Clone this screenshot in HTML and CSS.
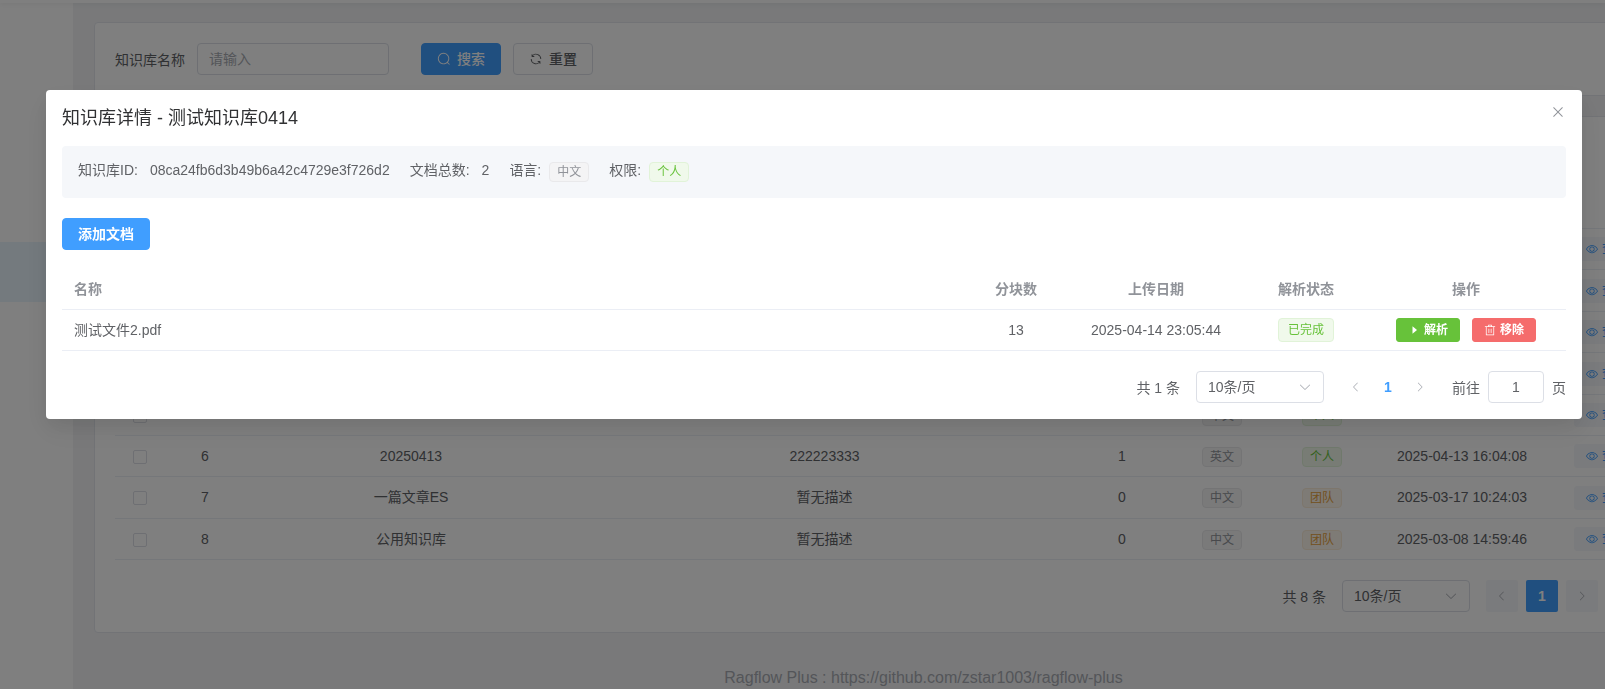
FILE: index.html
```html
<!DOCTYPE html>
<html lang="zh-CN">
<head>
    <meta charset="UTF-8">
    <meta name="viewport" content="width=device-width, initial-scale=1.0">
    <title>知识库管理</title>
    <link rel="stylesheet" href="styles.css">
</head>
<body>
    <!-- icon set -->
    <svg class="icon-defs" aria-hidden="true">
        <symbol id="i-search" viewBox="0 0 1024 1024"><path d="m795.904 750.72 124.992 124.928a32 32 0 0 1-45.248 45.248L750.656 795.904a416 416 0 1 1 45.248-45.248zM480 832a352 352 0 1 0 0-704 352 352 0 0 0 0 704"/></symbol>
        <symbol id="i-refresh" viewBox="0 0 1024 1024"><path d="M771.776 794.88A384 384 0 0 1 128 512h64a320 320 0 0 0 555.712 216.448H654.72a32 32 0 1 1 0-64h149.056a32 32 0 0 1 32 32v148.928a32 32 0 1 1-64 0v-50.56zM276.288 295.616h92.992a32 32 0 0 1 0 64H220.16a32 32 0 0 1-32-32V178.56a32 32 0 0 1 64 0v50.56A384 384 0 0 1 896.128 512h-64a320 320 0 0 0-555.776-216.384z"/></symbol>
        <symbol id="i-view" viewBox="0 0 1024 1024"><path d="M512 160c320 0 512 352 512 352S832 864 512 864 0 512 0 512s192-352 512-352m0 64c-225.28 0-384.128 208.064-436.8 288 52.608 79.872 211.456 288 436.8 288 225.28 0 384.128-208.064 436.8-288-52.608-79.872-211.456-288-436.8-288m0 64a224 224 0 1 1 0 448 224 224 0 0 1 0-448m0 64a160.192 160.192 0 0 0-160 160c0 88.192 71.744 160 160 160s160-71.808 160-160-71.744-160-160-160"/></symbol>
        <symbol id="i-delete" viewBox="0 0 1024 1024"><path d="M160 256H96a32 32 0 0 1 0-64h256V95.936a32 32 0 0 1 32-32h256a32 32 0 0 1 32 32V192h256a32 32 0 1 1 0 64h-64v672a32 32 0 0 1-32 32H192a32 32 0 0 1-32-32zm448-64v-64H416v64zM224 896h576V256H224zm192-128a32 32 0 0 1-32-32V416a32 32 0 0 1 64 0v320a32 32 0 0 1-32 32m192 0a32 32 0 0 1-32-32V416a32 32 0 0 1 64 0v320a32 32 0 0 1-32 32"/></symbol>
        <symbol id="i-play" viewBox="0 0 1024 1024"><path d="M384 192v640l384-320.064z"/></symbol>
        <symbol id="i-down" viewBox="0 0 1024 1024"><path d="M831.872 340.864 512 652.672 192.128 340.864a30.592 30.592 0 0 0-42.752 0 29.12 29.12 0 0 0 0 41.6L489.664 714.24a32 32 0 0 0 44.672 0l340.288-331.712a29.12 29.12 0 0 0 0-41.728 30.592 30.592 0 0 0-42.752 0z"/></symbol>
        <symbol id="i-left" viewBox="0 0 1024 1024"><path d="M609.408 149.376 277.76 489.6a32 32 0 0 0 0 44.672l331.648 340.352a29.12 29.12 0 0 0 41.728 0 30.592 30.592 0 0 0 0-42.752L339.264 511.936l311.872-319.872a30.592 30.592 0 0 0 0-42.688 29.12 29.12 0 0 0-41.728 0z"/></symbol>
        <symbol id="i-right" viewBox="0 0 1024 1024"><path d="M340.864 149.312a30.592 30.592 0 0 0 0 42.752L652.736 512 340.864 831.872a30.592 30.592 0 0 0 0 42.752 29.12 29.12 0 0 0 41.728 0L714.24 534.336a32 32 0 0 0 0-44.672L382.592 149.376a29.12 29.12 0 0 0-41.728 0z"/></symbol>
        <symbol id="i-close" viewBox="0 0 1024 1024"><path d="M764.288 214.592 512 466.88 259.712 214.592a31.936 31.936 0 0 0-45.12 45.12L466.752 512 214.528 764.224a31.936 31.936 0 1 0 45.12 45.184L512 557.184l252.288 252.288a31.936 31.936 0 0 0 45.12-45.12L557.12 512.064l252.288-252.352a31.936 31.936 0 1 0-45.12-45.184z"/></symbol>
    </svg>

    <div class="app">
        <header class="topbar"></header>
        <div class="layout">
            <nav class="sidebar">
                <a href="#" class="sidebar-item active" aria-label="知识库管理"></a>
            </nav>
            <main class="main">
                <section class="card">
                    <form class="search-form">
                        <label for="kb-name">知识库名称</label>
                        <input type="text" id="kb-name" class="input" placeholder="请输入">
                        <button type="button" class="btn primary"><svg class="icon"><use href="#i-search"/></svg>搜索</button>
                        <button type="reset" class="btn"><svg class="icon"><use href="#i-refresh"/></svg>重置</button>
                    </form>
                </section>

                <section class="card">
                    <div class="toolbar"></div>
                    <table class="table kb-table">
                        <colgroup>
                            <col class="w50"><col class="w80"><col class="w332"><col>
                            <col class="w100"><col class="w100"><col class="w100"><col class="w180"><col class="w180">
                        </colgroup>
                        <thead>
                            <tr><th></th><th></th><th></th><th></th><th></th><th></th><th></th><th></th><th></th></tr>
                        </thead>
                        <tbody>
                            <tr>
                                <td></td><td></td><td></td><td></td><td></td><td></td><td></td><td></td>
                                <td><button type="button" class="btn small text"><svg class="icon"><use href="#i-view"/></svg>查看</button></td>
                            </tr>
                            <tr class="tall">
                                <td></td><td></td><td></td><td></td><td></td><td></td><td></td><td></td>
                                <td><button type="button" class="btn small text"><svg class="icon"><use href="#i-view"/></svg>查看</button></td>
                            </tr>
                            <tr>
                                <td></td><td></td><td></td><td></td><td></td><td></td><td></td><td></td>
                                <td><button type="button" class="btn small text"><svg class="icon"><use href="#i-view"/></svg>查看</button></td>
                            </tr>
                            <tr class="tall">
                                <td></td><td></td><td></td><td></td><td></td><td></td><td></td><td></td>
                                <td><button type="button" class="btn small text"><svg class="icon"><use href="#i-view"/></svg>查看</button></td>
                            </tr>
                            <tr>
                                <td><input type="checkbox" class="checkbox" aria-label="选择第5行"></td>
                                <td></td><td></td><td></td><td></td>
                                <td><span class="tag info">中文</span></td>
                                <td><span class="tag success">个人</span></td>
                                <td></td>
                                <td><button type="button" class="btn small text"><svg class="icon"><use href="#i-view"/></svg>查看</button></td>
                            </tr>
                            <tr>
                                <td><input type="checkbox" class="checkbox" aria-label="选择第6行"></td>
                                <td>6</td>
                                <td>20250413</td>
                                <td>222223333</td>
                                <td>1</td>
                                <td><span class="tag info">英文</span></td>
                                <td><span class="tag success">个人</span></td>
                                <td>2025-04-13 16:04:08</td>
                                <td><button type="button" class="btn small text"><svg class="icon"><use href="#i-view"/></svg>查看</button></td>
                            </tr>
                            <tr class="tall">
                                <td><input type="checkbox" class="checkbox" aria-label="选择第7行"></td>
                                <td>7</td>
                                <td>一篇文章ES</td>
                                <td>暂无描述</td>
                                <td>0</td>
                                <td><span class="tag info">中文</span></td>
                                <td><span class="tag warning">团队</span></td>
                                <td>2025-03-17 10:24:03</td>
                                <td><button type="button" class="btn small text"><svg class="icon"><use href="#i-view"/></svg>查看</button></td>
                            </tr>
                            <tr>
                                <td><input type="checkbox" class="checkbox" aria-label="选择第8行"></td>
                                <td>8</td>
                                <td>公用知识库</td>
                                <td>暂无描述</td>
                                <td>0</td>
                                <td><span class="tag info">中文</span></td>
                                <td><span class="tag warning">团队</span></td>
                                <td>2025-03-08 14:59:46</td>
                                <td><button type="button" class="btn small text"><svg class="icon"><use href="#i-view"/></svg>查看</button></td>
                            </tr>
                        </tbody>
                    </table>
                    <div class="pagination background">
                        <span>共 8 条</span>
                        <div class="select">
                            <select aria-label="每页条数"><option>10条/页</option></select>
                            <svg class="icon"><use href="#i-down"/></svg>
                        </div>
                        <div class="pager">
                            <button type="button" aria-label="上一页" disabled><svg class="icon"><use href="#i-left"/></svg></button>
                            <button type="button" class="current">1</button>
                            <button type="button" aria-label="下一页" disabled><svg class="icon"><use href="#i-right"/></svg></button>
                        </div>
                        <label class="jump">前往 <input type="text" class="input" value="1"> 页</label>
                    </div>
                </section>

                <footer class="footer">Ragflow Plus : https://github.com/zstar1003/ragflow-plus</footer>
            </main>
        </div>
    </div>

    <div class="overlay">
        <div class="dialog" role="dialog" aria-modal="true" aria-labelledby="dialog-title">
            <header class="dialog-header">
                <h2 id="dialog-title">知识库详情 - 测试知识库0414</h2>
                <button type="button" class="dialog-close" aria-label="关闭"><svg class="icon"><use href="#i-close"/></svg></button>
            </header>

            <div class="kb-info">
                <span class="info-item">知识库ID:<span class="value">08ca24fb6d3b49b6a42c4729e3f726d2</span></span>
                <span class="info-item">文档总数:<span class="value">2</span></span>
                <span class="info-item">语言:<span class="tag info">中文</span></span>
                <span class="info-item">权限:<span class="tag success">个人</span></span>
            </div>

            <button type="button" class="btn primary add-btn">添加文档</button>

            <table class="table doc-table">
                <colgroup>
                    <col><col class="w100"><col class="w180"><col class="w120"><col class="w200">
                </colgroup>
                <thead>
                    <tr><th>名称</th><th>分块数</th><th>上传日期</th><th>解析状态</th><th>操作</th></tr>
                </thead>
                <tbody>
                    <tr>
                        <td>测试文件2.pdf</td>
                        <td>13</td>
                        <td>2025-04-14 23:05:44</td>
                        <td><span class="tag medium success">已完成</span></td>
                        <td>
                            <div class="actions">
                                <button type="button" class="btn small success"><svg class="icon"><use href="#i-play"/></svg>解析</button>
                                <button type="button" class="btn small danger"><svg class="icon"><use href="#i-delete"/></svg>移除</button>
                            </div>
                        </td>
                    </tr>
                </tbody>
            </table>

            <div class="pagination">
                <span>共 1 条</span>
                <div class="select">
                    <select aria-label="每页条数"><option>10条/页</option></select>
                    <svg class="icon"><use href="#i-down"/></svg>
                </div>
                <div class="pager">
                    <button type="button" aria-label="上一页" disabled><svg class="icon"><use href="#i-left"/></svg></button>
                    <button type="button" class="current">1</button>
                    <button type="button" aria-label="下一页" disabled><svg class="icon"><use href="#i-right"/></svg></button>
                </div>
                <label class="jump">前往 <input type="text" class="input" value="1"> 页</label>
            </div>
        </div>
    </div>
</body>
</html>
```
FILE: styles.css
```css
* {
    box-sizing: border-box;
}

body {
    margin: 0;
    height: 100vh;
    overflow: hidden;
    font-family: "Liberation Sans", "Noto Sans CJK SC", sans-serif;
    font-size: 14px;
    color: #606266;
}

button, input, select {
    font-family: inherit;
    font-size: 14px;
    color: #606266;
}

.icon-defs {
    display: none;
}

.icon {
    width: 14px;
    height: 14px;
    fill: currentColor;
    flex: none;
}

/* page shell */
.app {
    display: flex;
    flex-direction: column;
    height: 100vh;
    overflow: hidden;
}

.topbar {
    flex: none;
    height: 3px;
    background: #fff;
    box-shadow: 0 0 6px rgba(0, 0, 0, 0.12);
    z-index: 1;
}

.layout {
    flex: 1;
    display: flex;
    min-height: 0;
}

.sidebar {
    flex: none;
    width: 73px;
    padding-top: 239px;
    background: #fff;
}

.sidebar-item {
    display: block;
    height: 60px;
}

.sidebar-item.active {
    background: #e8f4fc;
}

/* the table does not shrink below this, the rest is cut off */
.main {
    flex: 1 0 1700px;
    width: 1700px;
    padding: 19px 20px 0 21px;
    background: #f2f3f5;
}

.card {
    margin-bottom: 20px;
    padding: 20px;
    background: #fff;
    border: 1px solid #e4e7ed;
    border-radius: 4px;
}

.search-form {
    display: flex;
    align-items: center;
}

.search-form .input {
    width: 192px;
    margin: 0 32px 0 12px;
}

.search-form .btn + .btn {
    margin-left: 12px;
}

.toolbar {
    height: 52px;
}

.footer {
    padding-top: 16px;
    text-align: center;
    font-size: 16px;
    line-height: 18px;
    color: #a8abb2;
}

/* controls */
.input {
    height: 32px;
    padding: 0 11px;
    border: 1px solid #dcdfe6;
    border-radius: 4px;
    background: #fff;
    outline: none;
}

.input::placeholder {
    color: #a8abb2;
}

.btn {
    display: inline-flex;
    align-items: center;
    justify-content: center;
    gap: 6px;
    height: 32px;
    padding: 0 15px;
    border: 1px solid #dcdfe6;
    border-radius: 4px;
    background: #fff;
    font-weight: 500;
    line-height: 1;
    white-space: nowrap;
    cursor: pointer;
}

.btn.small {
    height: 24px;
    padding: 0 11px;
    gap: 4px;
    border-radius: 3px;
    font-size: 12px;
    vertical-align: middle;
}

.btn.small .icon {
    width: 12px;
    height: 12px;
}

.btn.primary {
    background: #409eff;
    border-color: #409eff;
    color: #fff;
}

.btn.success {
    background: #67c23a;
    border-color: #67c23a;
    color: #fff;
    font-weight: 700;
}

.btn.danger {
    background: #f56c6c;
    border-color: #f56c6c;
    color: #fff;
    font-weight: 700;
}

.btn.text {
    background: #f5f7fa;
    border-color: #f5f7fa;
    color: #409eff;
}

.checkbox {
    appearance: none;
    display: inline-block;
    width: 14px;
    height: 14px;
    margin: 0;
    border: 1px solid #dcdfe6;
    border-radius: 2px;
    background: #fff;
    vertical-align: middle;
}

.tag {
    display: inline-block;
    height: 20px;
    padding: 0 7px;
    border: 1px solid;
    border-radius: 4px;
    font-size: 12px;
    line-height: 18px;
    vertical-align: middle;
}

.tag.medium {
    height: 24px;
    padding: 0 9px;
    line-height: 22px;
}

.tag.info {
    color: #909399;
    background: #f4f4f5;
    border-color: #e9e9eb;
}

.tag.success {
    color: #67c23a;
    background: #f0f9eb;
    border-color: #e1f3d8;
}

.tag.warning {
    color: #e6a23c;
    background: #fdf6ec;
    border-color: #faecd8;
}

/* tables */
.table {
    width: 100%;
    table-layout: fixed;
    border-collapse: separate;
    border-spacing: 0;
}

.table th, .table td {
    height: 41px;
    padding: 0 12px;
    border-bottom: 1px solid #ebeef5;
    text-align: center;
    line-height: 23px;
    white-space: nowrap;
}

.table th {
    height: 40px;
    color: #909399;
    font-weight: 700;
}

.table .tall td {
    height: 42px;
}

.kb-table td:last-child {
    padding: 0 22px;
    text-align: left;
}

.doc-table th:first-child, .doc-table td:first-child {
    text-align: left;
}

.w50 { width: 50px; }
.w80 { width: 80px; }
.w100 { width: 100px; }
.w120 { width: 120px; }
.w180 { width: 180px; }
.w200 { width: 200px; }
.w332 { width: 332px; }

.actions {
    display: flex;
    justify-content: center;
    gap: 12px;
}

/* pagination */
.pagination {
    display: flex;
    align-items: center;
    justify-content: flex-end;
    gap: 16px;
    margin-top: 20px;
}

.select {
    position: relative;
    width: 128px;
}

.select select {
    appearance: none;
    display: block;
    width: 100%;
    height: 32px;
    padding: 0 11px;
    border: 1px solid #dcdfe6;
    border-radius: 4px;
    background: #fff;
}

.select .icon {
    position: absolute;
    right: 12px;
    top: 9px;
    color: #a8abb2;
    pointer-events: none;
}

.pager {
    display: flex;
}

.pager button {
    display: flex;
    align-items: center;
    justify-content: center;
    width: 32px;
    height: 32px;
    padding: 0;
    border: 0;
    border-radius: 2px;
    background: none;
}

.pager button:disabled {
    color: #a8abb2;
}

.pager .icon {
    width: 12px;
    height: 12px;
}

.pager .current {
    color: #409eff;
    font-weight: 700;
}

.background .pager {
    gap: 8px;
    margin-right: 4px;
}

.background .pager button {
    background: #f5f7fa;
}

.background .pager .current {
    background: #409eff;
    color: #fff;
}

.jump {
    display: flex;
    align-items: center;
    gap: 8px;
}

.jump .input {
    width: 56px;
    text-align: center;
}

/* dialog */
.overlay {
    position: fixed;
    inset: 0;
    z-index: 10;
    padding: 90px 23px 0 46px;
    background: rgba(0, 0, 0, 0.5);
}

.dialog {
    padding: 16px;
    background: #fff;
    border-radius: 4px;
    box-shadow: 0 12px 32px 4px rgba(0, 0, 0, 0.04), 0 8px 20px rgba(0, 0, 0, 0.08);
}

.dialog-header {
    display: flex;
    justify-content: space-between;
    padding-bottom: 16px;
}

.dialog-header h2 {
    margin: 0;
    font-size: 18px;
    font-weight: 400;
    line-height: 24px;
    color: #303133;
}

.dialog-close {
    display: flex;
    height: 16px;
    margin-top: -2px;
    padding: 0;
    border: 0;
    background: none;
    color: #909399;
}

.dialog-close .icon {
    width: 16px;
    height: 16px;
}

.kb-info {
    display: flex;
    gap: 20px;
    padding: 16px;
    background: #f5f7fa;
    border-radius: 4px;
    line-height: 16px;
}

.info-item {
    display: flex;
    align-items: flex-start;
}

.info-item .value {
    margin-left: 12px;
}

.info-item .tag {
    margin-left: 8px;
}

.add-btn {
    margin: 20px 0;
    font-weight: 700;
}
```
